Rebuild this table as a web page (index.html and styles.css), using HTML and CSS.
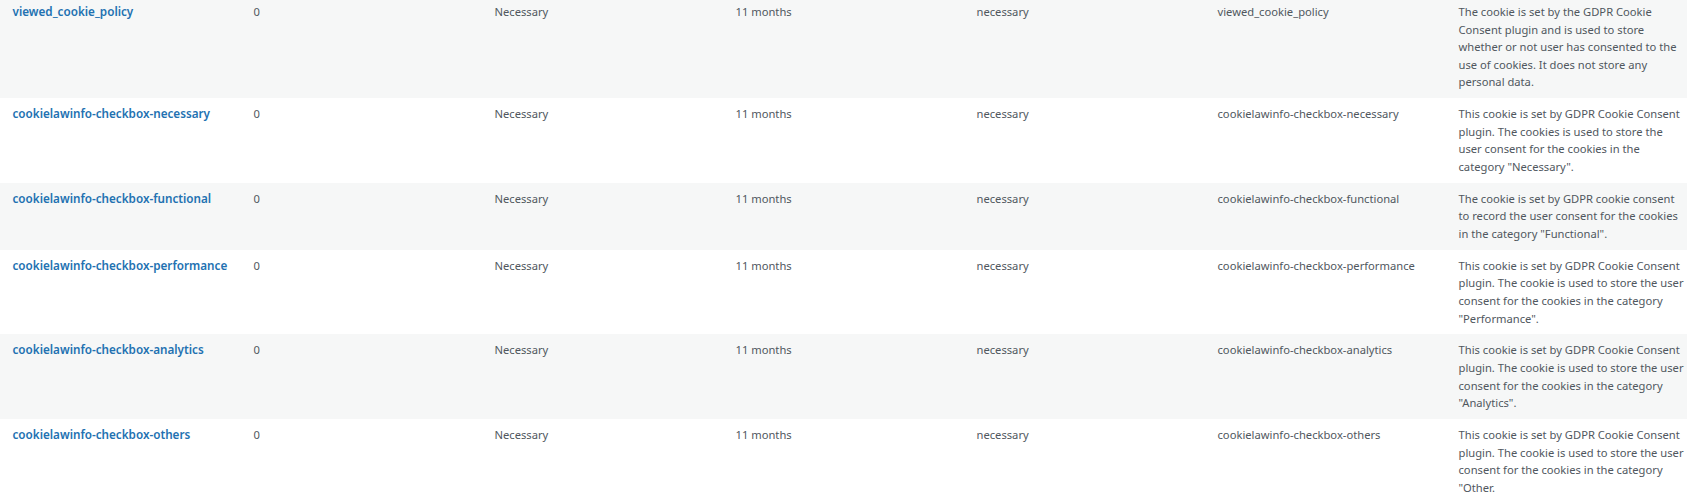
FILE: index.html
```html
<!DOCTYPE html>
<html>
<head>
<meta charset="utf-8">
<link rel="stylesheet" href="styles.css">
</head>
<body>
<table class="cookies">
<tbody>
<tr class="alt">
<td><a href="#" class="row-title">viewed_cookie_policy</a></td>
<td>0</td><td>Necessary</td><td>11 months</td><td>necessary</td><td>viewed_cookie_policy</td>
<td>The cookie is set by the GDPR Cookie Consent plugin and is used to store whether or not user has consented to the use of cookies. It does not store any personal data.</td>
</tr>
<tr>
<td><a href="#" class="row-title">cookielawinfo-checkbox-necessary</a></td>
<td>0</td><td>Necessary</td><td>11 months</td><td>necessary</td><td>cookielawinfo-checkbox-necessary</td>
<td>This cookie is set by GDPR Cookie Consent plugin. The cookies is used to store the user consent for the cookies in the category "Necessary".</td>
</tr>
<tr class="alt">
<td><a href="#" class="row-title">cookielawinfo-checkbox-functional</a></td>
<td>0</td><td>Necessary</td><td>11 months</td><td>necessary</td><td>cookielawinfo-checkbox-functional</td>
<td>The cookie is set by GDPR cookie consent to record the user consent for the cookies in the category "Functional".</td>
</tr>
<tr>
<td><a href="#" class="row-title">cookielawinfo-checkbox-performance</a></td>
<td>0</td><td>Necessary</td><td>11 months</td><td>necessary</td><td>cookielawinfo-checkbox-performance</td>
<td>This cookie is set by GDPR Cookie Consent plugin. The cookie is used to store the user consent for the cookies in the category "Performance".</td>
</tr>
<tr class="alt">
<td><a href="#" class="row-title">cookielawinfo-checkbox-analytics</a></td>
<td>0</td><td>Necessary</td><td>11 months</td><td>necessary</td><td>cookielawinfo-checkbox-analytics</td>
<td>This cookie is set by GDPR Cookie Consent plugin. The cookie is used to store the user consent for the cookies in the category "Analytics".</td>
</tr>
<tr>
<td><a href="#" class="row-title">cookielawinfo-checkbox-others</a></td>
<td>0</td><td>Necessary</td><td>11 months</td><td>necessary</td><td>cookielawinfo-checkbox-others</td>
<td>This cookie is set by GDPR Cookie Consent plugin. The cookie is used to store the user consent for the cookies in the category "Other.</td>
</tr>
</tbody>
</table>
</body>
</html>
```

FILE: styles.css
```css
html, body {
  margin: 0;
  padding: 0;
  background: #ffffff;
}
body {
  font-family: "Noto Sans", "Open Sans", sans-serif;
  font-size: 11.2px;
  color: #50575e;
  overflow: hidden;
}
.cookies {
  border-collapse: collapse;
  table-layout: fixed;
  width: 1687px;
  margin-top: -4px;
}
.cookies td {
  vertical-align: top;
  padding: 7.2px 2px 7.2px 12.5px;
  line-height: 17.55px;
}
.cookies tr.alt td {
  background: #f6f7f7;
}
.row-title {
  color: #2271b1;
  text-decoration: none;
  font-weight: 600;
  font-size: 11.7px;
}
```
